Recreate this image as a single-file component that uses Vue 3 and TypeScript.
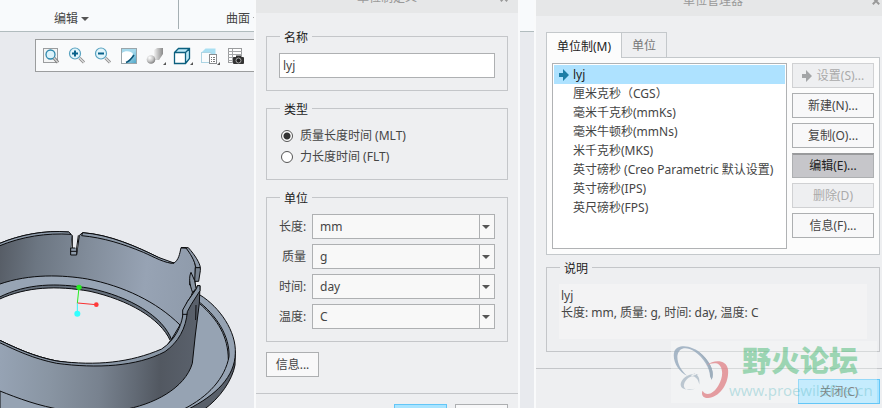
<script setup lang="ts">
import { ref } from 'vue'

interface UnitField {
  id: string
  label: string
  value: string
  options: string[]
}

interface SideAction {
  label: string
  state: 'normal' | 'pressed' | 'disabled'
  arrow?: boolean
}

const systemName = ref('lyj')
const systemType = ref('MLT')

const unitFields = ref<UnitField[]>([
  { id: 'length', label: '长度:', value: 'mm', options: ['mm', 'cm', 'm'] },
  { id: 'mass', label: '质量', value: 'g', options: ['g', 'kg'] },
  { id: 'time', label: '时间:', value: 'day', options: ['day', 'hr', 'sec'] },
  { id: 'temp', label: '温度:', value: 'C', options: ['C', 'F', 'K'] },
])

const systems = [
  'lyj',
  '厘米克秒（CGS）',
  '毫米千克秒(mmKs)',
  '毫米牛顿秒(mmNs)',
  '米千克秒(MKS)',
  '英寸磅秒 (Creo Parametric 默认设置)',
  '英寸磅秒(IPS)',
  '英尺磅秒(FPS)',
]
const selected = ref(0)

const actions: SideAction[] = [
  { label: '设置(S)...', state: 'disabled', arrow: true },
  { label: '新建(N)...', state: 'normal' },
  { label: '复制(O)...', state: 'normal' },
  { label: '编辑(E)...', state: 'pressed' },
  { label: '删除(D)', state: 'disabled' },
  { label: '信息(F)...', state: 'normal' },
]
</script>

<template>
  <div class="desk">
    <main class="workspace">
      <nav class="ribbon">
        <button class="group first">编辑<i class="caret"></i></button>
        <button class="group second">曲面<i class="caret"></i></button>
      </nav>
      <div class="toolbar">
        <button class="tool" aria-label="重新调整">
          <svg viewBox="0 0 20 20">
            <rect x="2.5" y="2.5" width="14" height="14" fill="#f4f5f5" stroke="#9b9d9f" />
            <circle cx="9.5" cy="8.5" r="4.5" fill="#dcf3fb" stroke="#2f88ad" stroke-width="1.3" />
            <path d="M13 12l4 4.5" stroke="#777" stroke-width="3.2" />
            <path d="M13 12l4 4.5" stroke="#d3d3d3" stroke-width="1.4" />
          </svg>
        </button>
        <button class="tool" aria-label="放大">
          <svg viewBox="0 0 20 20">
            <circle cx="8" cy="7.5" r="5.5" fill="#e2f5fb" stroke="#59a2c0" stroke-width="1.2" />
            <path d="M8 4.5v6M5 7.5h6" stroke="#08618b" stroke-width="2" />
            <path d="M12.5 12l4.5 4.5" stroke="#888" stroke-width="3" />
            <path d="M12.5 12l4.5 4.5" stroke="#ddd" stroke-width="1.4" />
          </svg>
        </button>
        <button class="tool" aria-label="缩小">
          <svg viewBox="0 0 20 20">
            <circle cx="8" cy="7.5" r="5.5" fill="#e2f5fb" stroke="#59a2c0" stroke-width="1.2" />
            <path d="M5 7.5h6" stroke="#08618b" stroke-width="2" />
            <path d="M12.5 12l4.5 4.5" stroke="#888" stroke-width="3" />
            <path d="M12.5 12l4.5 4.5" stroke="#ddd" stroke-width="1.4" />
          </svg>
        </button>
        <button class="tool" aria-label="重画">
          <svg viewBox="0 0 20 20">
            <defs>
              <linearGradient id="paint" x1="0" y1="0" x2="1" y2="1">
                <stop offset="0" stop-color="#a5d9ec" />
                <stop offset=".5" stop-color="#a5d9ec" />
                <stop offset="1" stop-color="#4aa3c6" />
              </linearGradient>
            </defs>
            <rect x="2.5" y="2.5" width="15" height="15" fill="url(#paint)" stroke="#9aa5aa" />
            <path d="M3 7C6 4 13 5 14 8C13 12 10 14 7 17H3z" fill="#fff" />
            <path d="M7 16.5C10 15.5 13 12 15 9" fill="none" stroke="#0d5678" stroke-width="1.5" />
          </svg>
        </button>
        <button class="tool" aria-label="渲染选项">
          <svg viewBox="0 0 20 20">
            <defs>
              <radialGradient id="ball" cx=".35" cy=".3" r=".7">
                <stop offset="0" stop-color="#fff" />
                <stop offset=".6" stop-color="#c4c4c4" />
                <stop offset="1" stop-color="#858585" />
              </radialGradient>
              <linearGradient id="tube">
                <stop offset="0" stop-color="#f2f2f2" />
                <stop offset=".5" stop-color="#bcbcbc" />
                <stop offset="1" stop-color="#8a8a8a" />
              </linearGradient>
            </defs>
            <path d="M9 4l3-2h6v6l-4 6H9z" fill="url(#tube)" />
            <circle cx="6" cy="13.5" r="4.3" fill="url(#ball)" />
            <path d="M21 16v3h-3z" fill="#555" />
          </svg>
        </button>
        <button class="tool" aria-label="显示样式">
          <svg viewBox="0 0 20 20">
            <path d="M3.5 6.5l4-4h11v10l-4 5h-11z" fill="#bdeaf8" />
            <rect x="3.5" y="6.5" width="10.5" height="11" fill="#fff" />
            <path d="M3.5 6.5l4-4h11v10l-4 5h-11zM3.5 6.5h11v11M14.5 6.5l4-4" fill="none" stroke="#0c607f" stroke-width="1.3" />
            <path d="M22 16v3h-3z" fill="#555" />
          </svg>
        </button>
        <button class="tool" aria-label="已保存方向">
          <svg viewBox="0 0 20 20">
            <path d="M4.5 6.5l4-4h10v9l-4 5h-10z" fill="#a9dff2" />
            <rect x="4.5" y="6.5" width="9.5" height="10" fill="#fafcfd" stroke="#add5e4" />
            <rect x="12.5" y="8.5" width="7" height="9" fill="#fff" stroke="#8a8d90" />
            <path d="M14 11.5h1M16 11.5h2M14 13.5h1M16 13.5h2M14 15.5h1M16 15.5h2" stroke="#777" />
            <path d="M23 16v3h-3z" fill="#555" />
          </svg>
        </button>
        <button class="tool" aria-label="视图管理器">
          <svg viewBox="0 0 20 20">
            <rect x="5.5" y="2.5" width="13" height="14" fill="#fff" stroke="#9a9c9e" />
            <path d="M5 5.5h14M5 8.5h14M5 11.5h14M5 14.5h14M9.5 3v14" stroke="#a5a7a9" />
            <rect x="10" y="11" width="11" height="7" rx="1" fill="#333" />
            <path d="M13 9.5h5v2h-5z" fill="#333" />
            <circle cx="15.5" cy="14.5" r="2.5" fill="#222" stroke="#aaa" />
          </svg>
        </button>
      </div>

      <svg class="model" viewBox="0 0 762 564" aria-hidden="true">
        <defs>
          <linearGradient id="back" gradientUnits="userSpaceOnUse" x1="0" y1="0" x2="600" y2="60">
            <stop offset="0" stop-color="#555b64" />
            <stop offset=".2" stop-color="#6c7682" />
            <stop offset=".45" stop-color="#818c9a" />
            <stop offset=".75" stop-color="#97a3b4" />
            <stop offset="1" stop-color="#8f9bab" />
          </linearGradient>
          <linearGradient id="front" gradientUnits="userSpaceOnUse" x1="0" y1="440" x2="600" y2="470">
            <stop offset="0" stop-color="#96a3b4" />
            <stop offset=".25" stop-color="#8995a3" />
            <stop offset=".5" stop-color="#78828f" />
            <stop offset=".68" stop-color="#626a75" />
            <stop offset=".8" stop-color="#525861" />
            <stop offset="1" stop-color="#5b626d" />
          </linearGradient>
        </defs>
        <g stroke="#0b0c0e" stroke-width="3" stroke-linejoin="round">
          <path d="M706 395L705 435C697 480 660 535 610 570H540L650 480z" fill="#59606a" />
          <path d="M0 360V570H560C650 525 704 470 706 400C709 335 660 262 600 225L500 300z" fill="#96a3b3" />
          <path d="M590 240C650 285 690 350 687 410C675 475 625 530 550 568M598 250C655 300 684 350 685 418" fill="none" />
          <path d="M-3 71C60 44 135 30 206 36L217 47L212 103H230L238 46L248 38C330 44 410 80 475 112C495 123 508 131 522 129C536 120 539 102 543 83H558C578 105 588 130 586 146V178L578 215L540 330L512 362L-3 250z" fill="url(#back)" />
          <path d="M-3 193C90 160 190 165 262 177C370 198 470 245 540 315L512 362L-3 260z" fill="#97a4b4" />
          <path d="M-3 232C80 190 170 188 270 205C390 230 490 290 515 360L490 392L-3 370z" fill="#66707c" />
          <path d="M-3 238C80 200 170 196 270 214C385 240 480 294 511 362L490 392C410 438 290 442 170 423C100 409 50 385 -3 360z" fill="#e8eaee" />
          <path d="M-3 71C60 44 135 30 206 36L213 43C140 38 65 50 -3 78zM248 38C330 44 410 80 475 112L522 129C500 133 460 110 430 97C370 72 310 53 245 47z" fill="#8e9baa" />
          <path d="M543 83L565 83C585 105 600 130 601 143L588 145C584 120 570 100 558 84z" fill="#8d99a8" />
          <path d="M586 143H601V152L596 184H584zM570 178H583L586 195H569z" fill="#798491" />
          <path d="M573 157C567 170 567 190 578 218L588 205L584 182z" fill="#8995a3" />
          <path d="M-3 360C50 385 100 409 170 423C290 442 410 438 495 390C535 365 547 320 549 288L562 245L590 205L592 197H600L598 250L586 345L577 430C555 505 460 555 365 570H190C115 558 55 535 -3 512z" fill="url(#front)" />
          <path d="M-3 360C50 385 100 409 170 423C290 438 390 428 485 387C525 360 543 320 548 288V270L562 245L590 205L592 197H600V212L574 253L562 275C558 325 535 367 495 395C410 440 290 446 170 430C100 416 50 392 -3 367z" fill="#8996a5" />
          <path d="M548 283H562M588 255L587 300" fill="none" />
          <path d="M217 46H235L230 105H212z" fill="#e8eaee" stroke="none" />
          <path d="M212 84H230V105H212z" fill="#8e9baa" stroke="none" />
          <path d="M217 46V84H212V105H230V84L235 46M212 94H230M217 84H226" fill="none" />
        </g>
        <path d="M237 202L232 250" stroke="#26ed22" stroke-width="3" />
        <path d="M232 250V282" stroke="#32f5fa" stroke-width="3" />
        <path d="M233 249L288 254" stroke="#f93030" stroke-width="3" />
        <circle cx="237" cy="202" r="8" fill="#26ed22" />
        <circle cx="289" cy="254" r="7" fill="#ff3a3a" />
        <circle cx="232" cy="281" r="9" fill="#32ffff" />
      </svg>
    </main>

    <section class="dialog definition">
      <header class="title">
        <span>单位制定义</span>
        <button class="close" aria-label="关闭窗口">
          <svg viewBox="0 0 10 10"><path d="M1 1l8 8M9 1l-8 8" stroke="currentColor" stroke-width="2.5" /></svg>
        </button>
      </header>
      <form class="body" @submit.prevent>
        <fieldset>
          <legend><label for="system-name">名称</label></legend>
          <input id="system-name" v-model="systemName" class="text" type="text" />
        </fieldset>
        <fieldset>
          <legend>类型</legend>
          <label class="choice"><input v-model="systemType" type="radio" name="type" value="MLT" />质量长度时间 (MLT)</label>
          <label class="choice"><input v-model="systemType" type="radio" name="type" value="FLT" />力长度时间 (FLT)</label>
        </fieldset>
        <fieldset>
          <legend>单位</legend>
          <div class="units">
            <div v-for="field in unitFields" :key="field.id" class="unit">
              <label :for="field.id">{{ field.label }}</label>
              <span class="drop">
                <select :id="field.id" v-model="field.value">
                  <option v-for="option in field.options" :key="option">{{ option }}</option>
                </select>
                <i class="caret"></i>
              </span>
            </div>
          </div>
        </fieldset>
        <button class="btn small info" type="button">信息...</button>
      </form>
      <footer class="footer">
        <button class="btn small primary" aria-label="确定"></button>
        <button class="btn small" aria-label="取消"></button>
      </footer>
    </section>

    <section class="dialog manager">
      <header class="title">
        <span>单位管理器</span>
        <button class="close" aria-label="关闭窗口">
          <svg viewBox="0 0 10 10"><path d="M1 1l8 8M9 1l-8 8" stroke="currentColor" stroke-width="2.5" /></svg>
        </button>
      </header>
      <div class="body">
        <div class="tabs" role="tablist">
          <button class="tab active" role="tab" aria-selected="true">单位制(M)</button>
          <button class="tab" role="tab" aria-selected="false">单位</button>
        </div>
        <div class="panel" role="tabpanel">
          <ul class="list" role="listbox" aria-label="单位制">
            <li
              v-for="(name, index) in systems"
              :key="name"
              class="item"
              :class="{ selected: index === selected }"
              role="option"
              :aria-selected="index === selected"
              @click="selected = index"
            >
              <span class="mark">
                <svg v-if="index === 0" viewBox="0 0 10 12"><path d="M0 4h4V0l6 6-6 6V8H0z" fill="#1c7da6" /></svg>
              </span>{{ name }}
            </li>
          </ul>
          <div class="actions">
            <button
              v-for="action in actions"
              :key="action.label"
              class="btn"
              :class="action.state"
              :disabled="action.state === 'disabled'"
            >
              <svg v-if="action.arrow" class="arrow" viewBox="0 0 10 12"><path d="M0 4h4V0l6 6-6 6V8H0z" fill="#a3a5a7" /></svg>
              {{ action.label }}
            </button>
          </div>
        </div>
        <fieldset class="description">
          <legend>说明</legend>
          <div class="note">
            <p>lyj</p>
            <p>长度: mm, 质量: g, 时间: day, 温度: C</p>
          </div>
        </fieldset>
      </div>
      <footer class="footer">
        <button class="btn primary">关闭(C)</button>
      </footer>
    </section>

    <div class="brand">
      <svg class="emblem" viewBox="0 0 180 186" aria-hidden="true">
        <path fill-rule="evenodd" d="M10 30C20 5 65 8 98 40C126 67 136 98 126 117L121 105C121 82 101 48 73 29C45 12 24 18 20 42C18 64 30 88 50 105C22 91 3 57 10 30z" fill="#8fa4b8" />
        <path d="M73 20C105 45 124 82 121 105L126 117C136 98 126 67 98 40z" fill="#8297aa" />
        <path d="M110 72C135 53 172 55 177 85C181 130 150 171 115 174C98 174 93 162 98 151C108 168 130 164 147 135C166 104 161 69 139 66C127 65 119 68 110 72z" fill="#e07f84" />
        <path d="M86 100C56 95 33 111 30 130C29 146 48 151 75 145C54 153 39 147 40 133C44 115 60 104 86 100zM72 98C84 102 90 111 88 132C84 117 80 108 62 105z" fill="#a9b8c5" />
      </svg>
      <div class="words">
        <strong>野火论坛</strong>
        <span>www.proewildfire.cn</span>
      </div>
    </div>
  </div>
</template>

<style>
body {
  margin: 0;
}
</style>

<style scoped>
.desk {
  position: relative;
  display: grid;
  grid-template-columns: 254px 266px 14px minmax(0, 1fr);
  grid-template-rows: 100vh;
  align-items: start;
  height: 100vh;
  overflow: hidden;
  background: #e8eaee;
  color: #454545;
  font: 12px/18px "Noto Sans", "Noto Sans CJK SC", sans-serif;
}

.desk *,
.desk *::before {
  box-sizing: border-box;
}

button,
input,
select {
  margin: 0;
  padding: 0;
  color: inherit;
  font: inherit;
}

.workspace {
  grid-area: 1 / 1 / 2 / 5;
  display: flex;
  flex-direction: column;
  height: 100%;
}

.ribbon {
  display: flex;
  flex: none;
  height: 32px;
  background: #f8fafc;
  border-bottom: 1px solid #b1bcbe;
}

.group {
  display: flex;
  align-items: center;
  gap: 3px;
  height: 29px;
  padding-top: 8px;
  border: 0;
  background: none;
}

.first {
  width: 179px;
  padding-left: 54px;
  border-right: 1px solid #a5afb3;
}

.second {
  padding-left: 47px;
}

.caret {
  border: 4px solid transparent;
  border-top-color: #555;
  border-bottom: 0;
}

.toolbar {
  display: flex;
  flex: none;
  align-items: center;
  gap: 6px;
  width: 300px;
  height: 33px;
  margin: 7px 0 0 35px;
  padding: 0 5px;
  background: #f9fafb;
  border: 1px solid #9b9d9e;
}

.tool {
  width: 20px;
  height: 20px;
  border: 0;
  background: none;
}

.tool svg {
  display: block;
  width: 20px;
  height: 20px;
  overflow: visible;
}

.model {
  width: 254px;
  height: 188px;
  margin-top: auto;
}

.dialog {
  background: #eeeff1;
  border: 2px solid #f9fafb;
}

.definition {
  grid-area: 1 / 2;
  margin-top: -19px;
}

.manager {
  grid-area: 1 / 4;
  margin: -16px -10px 0 0;
}

.title {
  display: grid;
  grid-template-columns: 20px 1fr 20px;
  align-items: center;
  height: 30px;
  padding: 0 4px;
  background: #e6e7e8;
  color: #999;
  text-align: center;
}

.title span {
  grid-column: 2;
}

.close {
  height: 20px;
  border: 0;
  background: none;
}

.close svg {
  display: block;
  width: 8px;
  height: 8px;
  margin: auto;
}

.body {
  padding: 14px 10px 16px;
}

.manager .body {
  padding-top: 16px;
}

fieldset {
  min-width: 0;
  margin: 0 0 8px;
  padding: 8px 12px 12px;
  border: 1px solid #c4c6c9;
}

legend {
  height: 18px;
  margin-left: 1px;
  padding: 2px 4px 0;
  color: #1c1c1c;
}

.text {
  display: block;
  width: 100%;
  height: 25px;
  padding: 0 3px;
  background: #fff;
  border: 1px solid #aeb0b2;
  border-radius: 0;
}

.choice {
  display: flex;
  align-items: center;
  gap: 7px;
  height: 21px;
  padding-left: 2px;
}

.choice input {
  appearance: none;
  width: 12px;
  height: 12px;
  border: 1px solid #555;
  border-radius: 50%;
  background: #fff;
}

.choice input:checked {
  background: radial-gradient(circle, #333 0 3px, #fff 4px);
}

.units {
  display: grid;
  gap: 5px;
}

.unit {
  display: grid;
  grid-template-columns: 27px minmax(0, 1fr);
  gap: 6px;
  align-items: center;
  text-align: right;
  white-space: nowrap;
}

.drop {
  display: grid;
  grid-template-columns: minmax(0, 1fr) 16px;
  align-items: center;
  height: 25px;
  background: linear-gradient(#aeb0b2, #aeb0b2) right 14px top / 1px 100% no-repeat #f8f8f8;
  border: 1px solid #aeb0b2;
}

.drop select {
  grid-area: 1 / 1 / 2 / 3;
  width: 100%;
  height: 23px;
  padding-left: 7px;
  appearance: none;
  background: none;
  border: 0;
}

.drop .caret {
  grid-area: 1 / 2;
  justify-self: center;
  pointer-events: none;
}

.btn {
  display: flex;
  align-items: center;
  justify-content: center;
  gap: 5px;
  width: 82px;
  height: 25px;
  background: #f8f8f9;
  border: 1px solid #adafb1;
  white-space: nowrap;
}

.small {
  width: 53px;
}

.info {
  margin-top: 10px;
}

.pressed {
  background: #c6c6ca;
  border-top: 2px solid #999a9c;
  color: #222;
}

.disabled {
  background: #eeeff1;
  border-color: #d0d1d3;
  color: #aaa;
}

.primary {
  background: #a9e4ff;
  border-color: #63c6f7;
}

.arrow {
  width: 10px;
  height: 12px;
}

.footer {
  display: flex;
  justify-content: flex-end;
  gap: 8px;
  padding: 10px;
  border-top: 1px solid #c4c6c9;
}

.tabs {
  display: flex;
  align-items: flex-start;
}

.tab {
  width: 45px;
  height: 25px;
  padding-top: 2px;
  border: 1px solid #c4c8cb;
  border-width: 1px 1px 0 0;
  background: #eeeff1;
  color: #777;
}

.tab.active {
  width: 76px;
  height: 26px;
  margin-bottom: -1px;
  border-left-width: 1px;
  background: #fcfcfc;
  color: #222;
  z-index: 1;
}

.panel {
  display: flex;
  gap: 5px;
  margin-bottom: 3px;
  padding: 5px;
  background: #fcfcfc;
  border: 1px solid #c4c8cb;
}

.list {
  flex: 1;
  min-width: 0;
  min-height: 186px;
  margin: 0;
  padding: 1px;
  list-style: none;
  background: #fff;
  border: 1px solid #b0b2b4;
}

.item {
  display: flex;
  align-items: center;
  height: 19px;
  white-space: nowrap;
}

.selected {
  background: #aee2ff;
  color: #222;
}

.mark {
  display: flex;
  flex: none;
  width: 19px;
  padding-left: 5px;
}

.mark svg {
  width: 10px;
  height: 12px;
}

.actions {
  display: grid;
  gap: 5px;
  align-content: start;
}

.description {
  margin: 0;
}

.note {
  min-height: 55px;
  padding: 3px 2px;
  background: #f3f3f4;
  line-height: 17px;
}

.note p {
  margin: 0;
}

.brand {
  position: absolute;
  right: 5px;
  bottom: 5px;
  display: flex;
  width: 206px;
  height: 62px;
  background: rgba(248, 252, 248, 0.35);
  pointer-events: none;
}

.emblem {
  flex: none;
  width: 58px;
  height: 62px;
  opacity: 0.75;
}

.words {
  display: flex;
  flex-direction: column;
  flex: 1;
  min-width: 0;
  white-space: nowrap;
}

.words strong {
  padding-left: 13px;
  color: rgba(70, 184, 115, 0.5);
  font-size: 29px;
  font-weight: 900;
  line-height: 40px;
}

.words span {
  color: rgba(80, 180, 190, 0.35);
  font-size: 15px;
  line-height: 18px;
}
</style>
